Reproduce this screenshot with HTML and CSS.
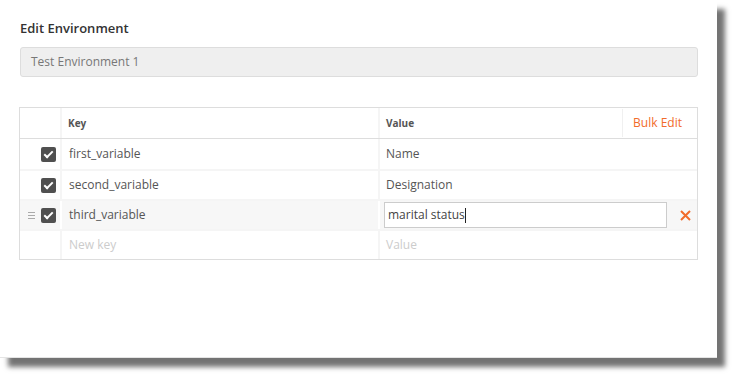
FILE: index.html
```html
<!DOCTYPE html>
<html>
<head>
<meta charset="utf-8">
<title>Edit Environment</title>
<link rel="stylesheet" href="styles.css">
</head>
<body>
<div class="panel">
	<h1 class="title">Edit Environment</h1>
	<div class="env-name">Test Environment 1</div>

	<div class="vars">
		<div class="row head">
			<div class="cell check"></div>
			<div class="cell key">Key</div>
			<div class="cell value">Value<span class="bulk">Bulk Edit</span></div>
		</div>
		<div class="row">
			<div class="cell check"><span class="box"></span></div>
			<div class="cell key">first_variable</div>
			<div class="cell value">Name</div>
		</div>
		<div class="row">
			<div class="cell check"><span class="box"></span></div>
			<div class="cell key">second_variable</div>
			<div class="cell value">Designation</div>
		</div>
		<div class="row active">
			<div class="cell check"><span class="grip"></span><span class="box"></span></div>
			<div class="cell key">third_variable</div>
			<div class="cell value">
				<div class="edit">marital status<span class="caret"></span></div>
				<span class="remove">
					<svg width="11" height="11" viewBox="0 0 11 11"><path d="M1 1 L10 10 M10 1 L1 10" stroke="#f26b2a" stroke-width="2" fill="none"/></svg>
				</span>
			</div>
		</div>
		<div class="row new">
			<div class="cell check"></div>
			<div class="cell key">New key</div>
			<div class="cell value">Value</div>
		</div>
	</div>
</div>
</body>
</html>
```

FILE: styles.css
```css
html, body { margin: 0; padding: 0; background: #fff; font: normal 12px/1.4 'Open Sans', sans-serif; color: #555; }
body { min-height: 375px; }

.panel { box-sizing: border-box; width: 717px; height: 358px; padding: 19px 19px 0 19px; background: #fff; border-bottom: 1px solid #e4e4e4; box-shadow: 8px 9px 5px rgba(0,0,0,0.55); }
.title { margin: 0 0 0 1px; font-size: 13px; font-weight: 600; color: #333; line-height: 18px; }
.env-name { box-sizing: border-box; height: 30px; margin: 10px 0 0 1px; padding: 0 10px; border: 1px solid #ddd; border-radius: 3px; background: #efefef; color: #777; line-height: 28px; }

.vars { margin-top: 30px; border: 1px solid #ddd; }
.row { display: flex; box-sizing: border-box; height: 30px; border-top: 2px solid #f5f5f5; }
.row.head { height: 31px; border-top: 0; border-bottom: 1px solid #ddd; }
.row.head + .row { border-top: 0; }
.row.active { background: #f7f7f7; }
.cell { display: flex; align-items: center; box-sizing: border-box; }
.check { width: 42px; flex: none; justify-content: flex-end; padding-right: 4px; border-right: 2px solid #f5f5f5; }
.row.active .check { border-right-color: #fff; }
.key { width: 318px; flex: none; padding-left: 7px; border-right: 2px solid #f5f5f5; }
.row.active .key { border-right-color: #fff; }
.value { flex: 1; padding-left: 6px; }

.head .key, .head .value { font-size: 10px; font-weight: 700; color: #555; }
.head .key { padding-left: 6px; }
.bulk { margin-left: auto; padding: 0 15px 0 10px; border-left: 1px solid #f0f0f0; font-size: 12px; font-weight: 400; color: #f26b2a; line-height: 28px; }

.box { position: relative; width: 15px; height: 15px; border-radius: 2px; background: #505050; }
.box::after { content: ''; position: absolute; left: 5px; top: 2px; width: 3px; height: 7px; border: solid #fff; border-width: 0 2px 2px 0; transform: rotate(45deg); }
.grip { width: 7px; height: 7px; margin-right: 6px; background: linear-gradient(#aaa 0, #aaa 1px, transparent 1px, transparent 3px, #aaa 3px, #aaa 4px, transparent 4px, transparent 6px, #aaa 6px, #aaa 7px); }

.edit { box-sizing: border-box; width: 283px; height: 26px; margin-left: -2px; padding: 0 3px; border: 1px solid #ccc; background: #fff; color: #444; line-height: 24px; display: flex; align-items: center; }
.caret { display: inline-block; width: 1px; height: 15px; background: #222; }
.remove { display: flex; margin-left: 13px; }

.new .key, .new .value { color: #ccc; }
```
